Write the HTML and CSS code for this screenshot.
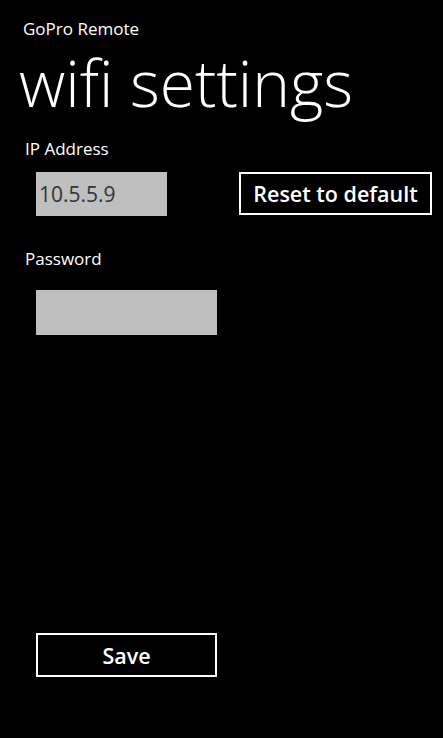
FILE: index.html
```html
<!DOCTYPE html>
<html>
<head>
<meta charset="utf-8">
<link rel="stylesheet" href="styles.css">
</head>
<body>
<div class="page">
  <div class="app-title">GoPro Remote</div>
  <h1 class="page-title">wifi settings</h1>
  <div class="form">
    <div class="label">IP Address</div>
    <div class="row ip-row">
      <div class="input ip">10.5.5.9</div>
      <div class="btn reset">Reset to default</div>
    </div>
    <div class="label pw-label">Password</div>
    <div class="row pw-row">
      <div class="input pw"></div>
    </div>
  </div>
  <div class="spacer"></div>
  <div class="btn save">Save</div>
</div>
</body>
</html>
```
FILE: styles.css
```css
html, body {
  margin: 0;
  padding: 0;
  background: #000;
}
body {
  width: 443px;
  height: 738px;
  overflow: hidden;
  color: #fff;
  font-family: "Open Sans", "Noto Sans", sans-serif;
}
.page {
  display: flex;
  flex-direction: column;
  height: 738px;
  box-sizing: border-box;
  padding: 19px 0 0 0;
}
.app-title {
  margin-left: 23px;
  font-size: 17px;
  line-height: 20px;
}
.page-title {
  margin: 12px 0 0 19px;
  font-size: 64px;
  font-weight: 300;
  line-height: 64px;
}
.form {
  display: flex;
  flex-direction: column;
  margin-top: 23px;
}
.label {
  margin-left: 25px;
  font-size: 17px;
  line-height: 22px;
}
.pw-label {
  margin-top: 32px;
}
.row {
  display: flex;
  align-items: flex-start;
}
.ip-row {
  margin-top: 12px;
}
.pw-row {
  margin-top: 20px;
}
.input {
  background: #bfbfbf;
  color: #333;
  box-sizing: border-box;
  margin-left: 36px;
  font-size: 21px;
  line-height: 44px;
  padding-left: 3px;
}
.ip {
  width: 131px;
  height: 44px;
}
.pw {
  width: 181px;
  height: 45px;
}
.btn {
  box-sizing: border-box;
  border: 2px solid #fff;
  display: flex;
  align-items: center;
  justify-content: center;
  font-size: 21.5px;
  font-weight: 600;
}
.reset {
  margin-left: 72px;
  width: 193px;
  height: 43px;
}
.spacer {
  flex: 1;
}
.save {
  margin: 0 0 61px 36px;
  width: 181px;
  height: 44px;
}
```
